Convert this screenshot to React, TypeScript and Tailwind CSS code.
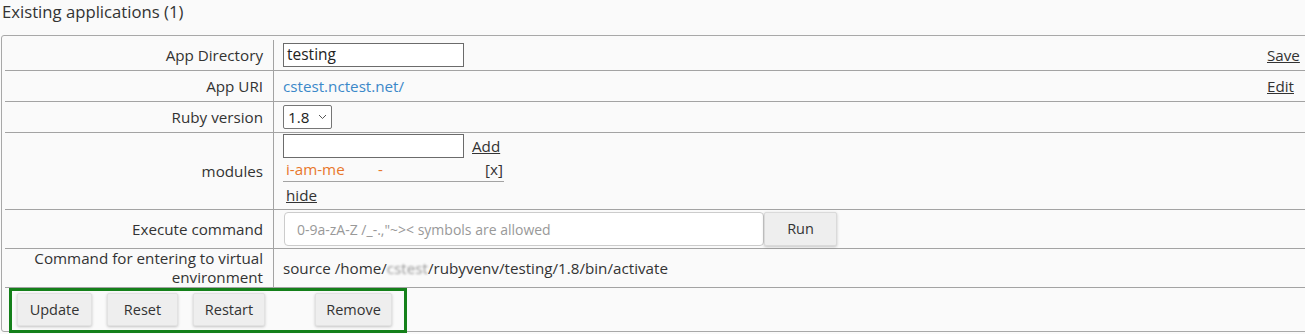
import React from "react";

const font = { fontFamily: '"Open Sans", "Noto Sans", sans-serif' };

function Label({ children, className = "" }: { children: React.ReactNode; className?: string }) {
  return (
    <div
      className={
        "w-[269px] shrink-0 border-r border-[#a3a3a3] flex items-center justify-end pr-[10px] text-right " +
        className
      }
    >
      {children}
    </div>
  );
}

function Btn({ children, className = "" }: { children: React.ReactNode; className?: string }) {
  return (
    <div
      className={
        "h-[33px] flex items-center justify-center bg-[#eeeeee] border border-[#e2e2e2] rounded-[2px] shadow-[0_1px_3px_rgba(0,0,0,0.22)] text-[14.5px] text-[#333] " +
        className
      }
    >
      {children}
    </div>
  );
}

export default function App() {
  return (
    <div
      className="w-[1305px] h-[334px] overflow-hidden bg-[#fafafa] text-[15.2px] text-[#333]"
      style={font}
    >
      <div className="h-[35px] pl-[2px] text-[16.7px] leading-[24px] text-[#333]">
        Existing applications (1)
      </div>
      <div className="ml-[1px] w-[1330px] h-[297px] border border-[#a8a8a8] rounded-[3px] bg-[#fafafa] px-[3px] pt-[4px]">
        {/* Row 1 */}
        <div className="flex h-[31px] border-b border-[#a3a3a3]">
          <Label>App Directory</Label>
          <div className="flex-1 flex items-center pl-[9px]">
            <div className="w-[181px] h-[24px] border border-[#6b6b6b] bg-white flex items-center pl-[3px] text-[15.5px] text-[#222]">
              testing
            </div>
          </div>
          <div className="w-[60px] flex items-center">
            <span className="underline">Save</span>
          </div>
        </div>
        {/* Row 2 */}
        <div className="flex h-[31px] border-b border-[#a3a3a3]">
          <Label>App URI</Label>
          <div className="flex-1 flex items-center pl-[9px]">
            <span className="text-[#3b88c9]">cstest.nctest.net/</span>
          </div>
          <div className="w-[60px] flex items-center">
            <span className="underline">Edit</span>
          </div>
        </div>
        {/* Row 3 */}
        <div className="flex h-[31px] border-b border-[#a3a3a3]">
          <Label>Ruby version</Label>
          <div className="flex-1 flex items-center pl-[9px]">
            <div className="w-[49px] h-[24px] border border-[#767676] rounded-[2px] bg-white flex items-center pl-[4px] text-[#222]">
              <span>1.8</span>
              <svg className="ml-[9px]" width="9" height="6" viewBox="0 0 9 6">
                <path d="M1 1l3.5 3.5L8 1" fill="none" stroke="#555" strokeWidth="1" />
              </svg>
            </div>
          </div>
          <div className="w-[60px]" />
        </div>
        {/* Row 4 modules */}
        <div className="flex h-[77px] border-b border-[#a3a3a3]">
          <Label>modules</Label>
          <div className="flex-1 flex flex-col items-start pl-[9px] pt-[1px]">
            <div className="flex items-center h-[24px]">
              <div className="w-[181px] h-[24px] border border-[#6b6b6b] bg-white" />
              <span className="ml-[8px] underline">Add</span>
            </div>
            <div className="w-[221px] h-[24px] border-b border-[#a3a3a3] flex items-center">
              <span className="w-[95px] pl-[3px] text-[#e8772b]">i-am-me</span>
              <span className="text-[#e8772b]">-</span>
              <span className="flex-1" />
              <span className="pr-[1px]">[x]</span>
            </div>
            <div className="h-[24px] leading-[26px] pl-[3px]">
              <span className="underline">hide</span>
            </div>
          </div>
          <div className="w-[60px]" />
        </div>
        {/* Row 5 */}
        <div className="flex h-[39px] border-b border-[#a3a3a3]">
          <Label>Execute command</Label>
          <div className="flex-1 flex items-center pl-[10px]">
            <div className="w-[480px] h-[34px] border border-[#cccccc] rounded-[4px] bg-white flex items-center pl-[12px] text-[14px] text-[#999]">
              0-9a-zA-Z /_-.,"~&gt;&lt; symbols are allowed
            </div>
            <div className="w-[73px] h-[34px] bg-[#eeeeee] border border-[#dadada] rounded-[2px] shadow-[0_1px_3px_rgba(0,0,0,0.22)] flex items-center justify-center text-[14.5px]">
              Run
            </div>
          </div>
          <div className="w-[60px]" />
        </div>
        {/* Row 6 */}
        <div className="flex h-[39px] border-b border-[#a3a3a3]">
          <Label className="leading-[19px]">
            <span>
              Command for entering to virtual
              <br />
              environment
            </span>
          </Label>
          <div className="flex-1 flex items-center pl-[9px]">
            <span>
              source /home/
              <span className="blur-[1.2px] opacity-50">cstest</span>
              /rubyvenv/testing/1.8/bin/activate
            </span>
          </div>
          <div className="w-[60px]" />
        </div>
        {/* Buttons */}
        <div className="h-[43px] pl-[4px]">
          <div className="relative w-[398px] h-[45px] border-[3px] border-[#14801a] flex items-start pt-[2px] pl-[5px]">
            <Btn className="w-[75px]">Update</Btn>
            <Btn className="w-[71px] ml-[15px]">Reset</Btn>
            <Btn className="w-[72px] ml-[15px]">Restart</Btn>
            <Btn className="w-[77px] ml-[50px]">Remove</Btn>
          </div>
        </div>
      </div>
    </div>
  );
}
